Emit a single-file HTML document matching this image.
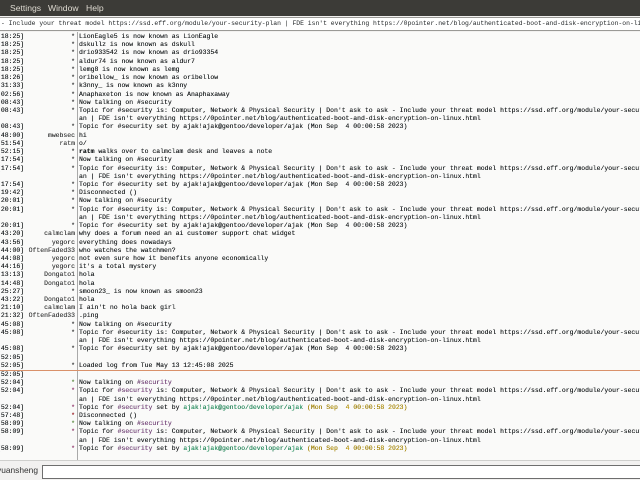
<!DOCTYPE html>
<html><head><meta charset="utf-8"><style>
*{margin:0;padding:0;box-sizing:border-box}
body{width:640px;height:480px;overflow:hidden;background:#f2f1f0;position:relative;font-family:"Liberation Mono",monospace}
#menu{position:absolute;left:0;top:0;width:640px;height:16px;background:#3c3b37;color:#dfdbd2;font:8.6px "Liberation Sans",sans-serif;line-height:16px;white-space:pre}
#menu span{position:absolute;top:0}
#topic{position:absolute;left:-2px;top:17px;width:644px;height:14px;background:#fff;border:1px solid #9a9996;font-size:6.4px;line-height:12px;color:#1e2224;white-space:pre;overflow:hidden;padding-left:2px}
#chat{position:absolute;left:0;top:32px;width:640px;height:428px;background:#fafaf9;overflow:hidden}
#sep{position:absolute;left:77px;top:0;width:1px;height:428px;background:#a9a9a9}
.r{position:absolute;left:0;height:8.22px;font-size:6.45px;line-height:8.22px;color:#1e2224;white-space:pre;width:640px;text-shadow:0 0 0.3px #1e2224}
.t{position:absolute;left:-3px}
.n{position:absolute;right:565px;color:#444}
.m{position:absolute;left:79px}
.p{color:#8a4f8e}.g{color:#26a269}.y{color:#c8a000}.k{color:#73b34c}.pk{color:#c0408a}.rd{color:#d01b24}
#hr{position:absolute;left:0;top:338px;width:640px;height:1px;background:#d9916a}
#bot{position:absolute;left:0;top:460px;width:640px;height:20px;background:#f2f1f0;border-top:1px solid #cfcfcd}
#nick{position:absolute;left:-3px;top:4px;font:8.4px "Liberation Sans",sans-serif;color:#333}
#inp{position:absolute;left:42px;top:4px;width:600px;height:14px;background:#fff;border:1px solid #6e6e6e}
</style></head><body>
<div id="menu"><span style="left:-3px">r</span><span style="left:10px">Settings</span><span style="left:48px">Window</span><span style="left:86px">Help</span></div>
<div id="topic">- Include your threat model https://ssd.eff.org/module/your-security-plan | FDE isn't everything https://0pointer.net/blog/authenticated-boot-and-disk-encryption-on-linux.html</div>
<div id="chat">
<div id="sep"></div>
<div id="hr"></div>
<div class="r" style="top:1px"><span class="t">[18:25]</span><span class="n">*</span><span class="m">LionEagle5 is now known as LionEagle</span></div>
<div class="r" style="top:9.22px"><span class="t">[18:25]</span><span class="n">*</span><span class="m">dskullz is now known as dskull</span></div>
<div class="r" style="top:17.44px"><span class="t">[18:25]</span><span class="n">*</span><span class="m">drio933542 is now known as drio93354</span></div>
<div class="r" style="top:25.66px"><span class="t">[18:25]</span><span class="n">*</span><span class="m">aldur74 is now known as aldur7</span></div>
<div class="r" style="top:33.88px"><span class="t">[18:25]</span><span class="n">*</span><span class="m">lemg8 is now known as lemg</span></div>
<div class="r" style="top:42.1px"><span class="t">[18:26]</span><span class="n">*</span><span class="m">oribellow_ is now known as oribellow</span></div>
<div class="r" style="top:50.32px"><span class="t">[31:33]</span><span class="n">*</span><span class="m">k3nny_ is now known as k3nny</span></div>
<div class="r" style="top:58.54px"><span class="t">[02:56]</span><span class="n">*</span><span class="m">Anaphaxeton is now known as Anaphaxaway</span></div>
<div class="r" style="top:66.76px"><span class="t">[08:43]</span><span class="n">*</span><span class="m">Now talking on #security</span></div>
<div class="r" style="top:74.98px"><span class="t">[08:43]</span><span class="n">*</span><span class="m">Topic for #security is: Computer, Network &amp; Physical Security | Don't ask to ask - Include your threat model https://ssd.eff.org/module/your-security-plan</span></div>
<div class="r" style="top:83.2px"><span class="m">an | FDE isn't everything https://0pointer.net/blog/authenticated-boot-and-disk-encryption-on-linux.html</span></div>
<div class="r" style="top:91.42px"><span class="t">[08:43]</span><span class="n">*</span><span class="m">Topic for #security set by ajak!ajak@gentoo/developer/ajak (Mon Sep  4 00:00:58 2023)</span></div>
<div class="r" style="top:99.64px"><span class="t">[48:00]</span><span class="n">mwebsec</span><span class="m">hi</span></div>
<div class="r" style="top:107.86px"><span class="t">[51:54]</span><span class="n">ratm</span><span class="m">o/</span></div>
<div class="r" style="top:116.08px"><span class="t">[52:15]</span><span class="n">*</span><span class="m"><b>ratm</b> walks over to calmclam desk and leaves a note</span></div>
<div class="r" style="top:124.3px"><span class="t">[17:54]</span><span class="n">*</span><span class="m">Now talking on #security</span></div>
<div class="r" style="top:132.52px"><span class="t">[17:54]</span><span class="n">*</span><span class="m">Topic for #security is: Computer, Network &amp; Physical Security | Don't ask to ask - Include your threat model https://ssd.eff.org/module/your-security-plan</span></div>
<div class="r" style="top:140.74px"><span class="m">an | FDE isn't everything https://0pointer.net/blog/authenticated-boot-and-disk-encryption-on-linux.html</span></div>
<div class="r" style="top:148.96px"><span class="t">[17:54]</span><span class="n">*</span><span class="m">Topic for #security set by ajak!ajak@gentoo/developer/ajak (Mon Sep  4 00:00:58 2023)</span></div>
<div class="r" style="top:157.18px"><span class="t">[19:42]</span><span class="n">*</span><span class="m">Disconnected ()</span></div>
<div class="r" style="top:165.4px"><span class="t">[20:01]</span><span class="n">*</span><span class="m">Now talking on #security</span></div>
<div class="r" style="top:173.62px"><span class="t">[20:01]</span><span class="n">*</span><span class="m">Topic for #security is: Computer, Network &amp; Physical Security | Don't ask to ask - Include your threat model https://ssd.eff.org/module/your-security-plan</span></div>
<div class="r" style="top:181.84px"><span class="m">an | FDE isn't everything https://0pointer.net/blog/authenticated-boot-and-disk-encryption-on-linux.html</span></div>
<div class="r" style="top:190.06px"><span class="t">[20:01]</span><span class="n">*</span><span class="m">Topic for #security set by ajak!ajak@gentoo/developer/ajak (Mon Sep  4 00:00:58 2023)</span></div>
<div class="r" style="top:198.28px"><span class="t">[43:20]</span><span class="n">calmclam</span><span class="m">why does a forum need an ai customer support chat widget</span></div>
<div class="r" style="top:206.5px"><span class="t">[43:56]</span><span class="n">yegorc</span><span class="m">everything does nowadays</span></div>
<div class="r" style="top:214.72px"><span class="t">[44:00]</span><span class="n">OftenFaded33</span><span class="m">who watches the watchmen?</span></div>
<div class="r" style="top:222.94px"><span class="t">[44:08]</span><span class="n">yegorc</span><span class="m">not even sure how it benefits anyone economically</span></div>
<div class="r" style="top:231.16px"><span class="t">[44:16]</span><span class="n">yegorc</span><span class="m">it's a total mystery</span></div>
<div class="r" style="top:239.38px"><span class="t">[13:13]</span><span class="n">Dongato1</span><span class="m">hola</span></div>
<div class="r" style="top:247.6px"><span class="t">[14:48]</span><span class="n">Dongato1</span><span class="m">hola</span></div>
<div class="r" style="top:255.82px"><span class="t">[25:27]</span><span class="n">*</span><span class="m">smoon23_ is now known as smoon23</span></div>
<div class="r" style="top:264.04px"><span class="t">[43:22]</span><span class="n">Dongato1</span><span class="m">hola</span></div>
<div class="r" style="top:272.26px"><span class="t">[21:10]</span><span class="n">calmclam</span><span class="m">I ain't no hola back girl</span></div>
<div class="r" style="top:280.48px"><span class="t">[21:32]</span><span class="n">OftenFaded33</span><span class="m">.ping</span></div>
<div class="r" style="top:288.7px"><span class="t">[45:08]</span><span class="n">*</span><span class="m">Now talking on #security</span></div>
<div class="r" style="top:296.92px"><span class="t">[45:08]</span><span class="n">*</span><span class="m">Topic for #security is: Computer, Network &amp; Physical Security | Don't ask to ask - Include your threat model https://ssd.eff.org/module/your-security-plan</span></div>
<div class="r" style="top:305.14px"><span class="m">an | FDE isn't everything https://0pointer.net/blog/authenticated-boot-and-disk-encryption-on-linux.html</span></div>
<div class="r" style="top:313.36px"><span class="t">[45:08]</span><span class="n">*</span><span class="m">Topic for #security set by ajak!ajak@gentoo/developer/ajak (Mon Sep  4 00:00:58 2023)</span></div>
<div class="r" style="top:321.58px"><span class="t">[52:05]</span></div>
<div class="r" style="top:329.8px"><span class="t">[52:05]</span><span class="n">*</span><span class="m">Loaded log from Tue May 13 12:45:08 2025</span></div>
<div class="r" style="top:339px"><span class="t">[52:05]</span></div>
<div class="r" style="top:347.2px"><span class="t">[52:04]</span><span class="n k">*</span><span class="m">Now talking on <span class="p">#security</span></span></div>
<div class="r" style="top:355.4px"><span class="t">[52:04]</span><span class="n pk">*</span><span class="m">Topic for <span class="p">#security</span> is: Computer, Network &amp; Physical Security | Don't ask to ask - Include your threat model https://ssd.eff.org/module/your-security-plan</span></div>
<div class="r" style="top:363.6px"><span class="m">an | FDE isn't everything https://0pointer.net/blog/authenticated-boot-and-disk-encryption-on-linux.html</span></div>
<div class="r" style="top:371.8px"><span class="t">[52:04]</span><span class="n pk">*</span><span class="m">Topic for <span class="p">#security</span> set by <span class="g">ajak!ajak@gentoo/developer/ajak</span> <span class="y">(Mon Sep  4 00:00:58 2023)</span></span></div>
<div class="r" style="top:380px"><span class="t">[57:48]</span><span class="n rd">*</span><span class="m">Disconnected ()</span></div>
<div class="r" style="top:388.2px"><span class="t">[58:09]</span><span class="n k">*</span><span class="m">Now talking on <span class="p">#security</span></span></div>
<div class="r" style="top:396.4px"><span class="t">[58:09]</span><span class="n pk">*</span><span class="m">Topic for <span class="p">#security</span> is: Computer, Network &amp; Physical Security | Don't ask to ask - Include your threat model https://ssd.eff.org/module/your-security-plan</span></div>
<div class="r" style="top:404.6px"><span class="m">an | FDE isn't everything https://0pointer.net/blog/authenticated-boot-and-disk-encryption-on-linux.html</span></div>
<div class="r" style="top:412.8px"><span class="t">[58:09]</span><span class="n pk">*</span><span class="m">Topic for <span class="p">#security</span> set by <span class="g">ajak!ajak@gentoo/developer/ajak</span> <span class="y">(Mon Sep  4 00:00:58 2023)</span></span></div>
</div>
<div id="bot"><span id="nick">yuansheng</span><div id="inp"></div></div>
</body></html>
